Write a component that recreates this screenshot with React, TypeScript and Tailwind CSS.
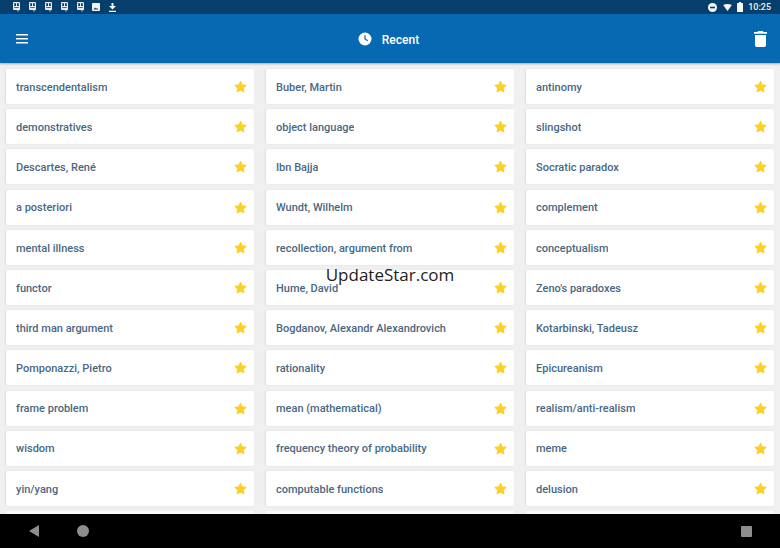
const rows: string[][] = [
  ["transcendentalism", "Buber, Martin", "antinomy"],
  ["demonstratives", "object language", "slingshot"],
  ["Descartes, René", "Ibn Bajja", "Socratic paradox"],
  ["a posteriori", "Wundt, Wilhelm", "complement"],
  ["mental illness", "recollection, argument from", "conceptualism"],
  ["functor", "Hume, David", "Zeno's paradoxes"],
  ["third man argument", "Bogdanov, Alexandr Alexandrovich", "Kotarbinski, Tadeusz"],
  ["Pomponazzi, Pietro", "rationality", "Epicureanism"],
  ["frame problem", "mean (mathematical)", "realism/anti-realism"],
  ["wisdom", "frequency theory of probability", "meme"],
  ["yin/yang", "computable functions", "delusion"],
];

function Star() {
  return (
    <svg width="13" height="13" viewBox="0 0 24 24" className="shrink-0 fill-[#fdd023] stroke-[#fdd023]">
      <path strokeWidth="2" strokeLinejoin="round" d="M12 2.500l3 6.500 7 .9-5.100 4.900 1.300 7L12 18.400l-6.200 3.400 1.300-7L2 9.900l7-.9z" />
    </svg>
  );
}

function SimIcon() {
  return (
    <svg width="7" height="10" viewBox="0 0 7 10" className="fill-[#e4ebf1]">
      <path fillRule="evenodd" d="M1 0h5a1 1 0 0 1 1 1v7H5.500v1.500h-1V8H1a1 1 0 0 1-1-1V1a1 1 0 0 1 1-1zM1.200 1.300v2.600h1.800V1.300zM4 1.300v2.600h1.800V1.300zM1.200 5.200v.9h4.600v-.9z" />
    </svg>
  );
}

export default function App() {
  return (
    <div className="relative flex h-[548px] w-[780px] flex-col overflow-hidden bg-[#f0f0f0] font-['Roboto','Liberation_Sans',sans-serif]">
      <div className="flex h-[14px] shrink-0 items-center justify-between bg-[#063f6c] pl-[13px] pr-[9px]">
        <div className="flex items-center gap-[9px]">
          <SimIcon />
          <SimIcon />
          <SimIcon />
          <SimIcon />
          <SimIcon />
          <svg width="8" height="8" viewBox="0 0 8 8" className="ml-[-1px]">
            <rect width="8" height="8" rx="1" fill="#f2f5f8" />
            <path d="M1.500 6.500l1.500-2 1.200 1.300.8-.8 1.500 1.500z" fill="#063f6c" />
          </svg>
          <svg width="7" height="9" viewBox="0 0 7 9" className="fill-[#f2f5f8]">
            <path d="M2.500 0h2v3H7L3.500 6.500 0 3h2.500zM0 7.800h7V9H0z" />
          </svg>
        </div>
        <div className="flex items-center">
          <svg width="9" height="9" viewBox="0 0 9 9">
            <circle cx="4.500" cy="4.500" r="4.500" fill="#f5f7f9" />
            <rect x="2" y="3.700" width="5" height="1.600" fill="#063f6c" />
          </svg>
          <svg width="9" height="7" viewBox="0 0 10 8" className="ml-[6px] fill-[#f5f7f9]">
            <path d="M0 1.200C3-.4 7-.4 10 1.200L5 8z" />
          </svg>
          <svg width="6" height="10" viewBox="0 0 6 10" className="ml-[5px] fill-[#f5f7f9]">
            <path d="M2 0h2v1h1.500a.5.5 0 0 1 .5.5V9.500a.5.5 0 0 1-.5.5H.5a.5.5 0 0 1-.5-.5V1.500A.5.5 0 0 1 .5 1H2z" />
          </svg>
          <span className="ml-[5px] text-[9px] leading-[14px] font-medium text-[#eef3f7]">10:25</span>
        </div>
      </div>

      <div className="flex h-[49px] shrink-0 items-center justify-between bg-[#0669b2] pl-[16px] pr-[13px] shadow-[0_1px_2px_rgba(0,0,0,0.3)]">
        <svg width="12" height="10" viewBox="0 0 12 10" className="mt-[1px] fill-white">
          <rect width="12" height="1.500" />
          <rect y="4" width="12" height="1.500" />
          <rect y="8" width="12" height="1.500" />
        </svg>
        <div className="flex items-center gap-[10px] pr-[5px]">
          <svg width="14" height="14" viewBox="0 0 14 14">
            <circle cx="7" cy="7" r="6.500" fill="#fff" />
            <path d="M7 3.200V7l2.800 1.700" fill="none" stroke="#0669b2" strokeWidth="1.200" />
          </svg>
          <span className="pt-[2px] text-[12px] font-medium text-white">Recent</span>
        </div>
        <svg width="13" height="16" viewBox="0 0 13 16" className="fill-white">
          <path d="M4.200 0h4.600l.8 1H13v1.700H0V1h3.400zM1 4h11v10.300a1.700 1.700 0 0 1-1.700 1.700H2.700A1.700 1.700 0 0 1 1 14.300z" />
        </svg>
      </div>

      <div className="grid flex-1 grid-cols-3 content-start gap-x-[12px] gap-y-[5.200px] overflow-hidden px-[6px] pt-[6px]">
        {rows.flat().map((t, i) => (
          <div
            key={i}
            className="flex h-[35px] items-center justify-between rounded-[2px] bg-white pl-[10px] pr-[7px] shadow-[-1px_0_2px_rgba(0,0,0,0.08)]"
          >
            <span className="truncate pt-[3px] text-[11px] font-medium text-[#4a6882]">{t}</span>
            <Star />
          </div>
        ))}
        <div className="h-[35px] bg-[#fafafa]" />
        <div className="h-[35px] bg-[#fafafa]" />
        <div className="h-[35px] bg-[#fafafa]" />
      </div>

      <div className="flex h-[34px] shrink-0 items-center justify-between bg-black pl-[29px] pr-[28px]">
        <div className="flex items-center gap-[38px]">
          <svg width="10" height="12" viewBox="0 0 10 12">
            <path d="M10 0v12L0 6z" fill="#8e8e8e" />
          </svg>
          <div className="h-[12px] w-[12px] rounded-full bg-[#8e8e8e]" />
        </div>
        <div className="h-[11px] w-[11px] rounded-[1px] bg-[#8e8e8e]" />
      </div>

      <div className="absolute left-0 top-[263px] w-full text-center font-['Open_Sans',sans-serif] text-[17px] leading-[23px] text-[#222]">
        UpdateStar.com
      </div>
    </div>
  );
}
